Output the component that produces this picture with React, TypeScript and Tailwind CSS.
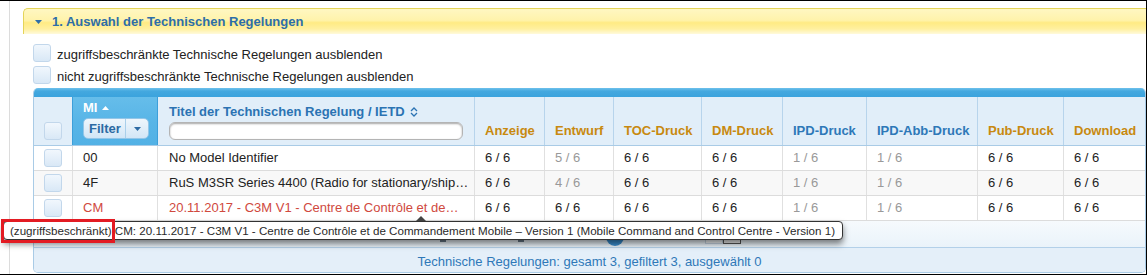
import React from "react";

const cols =
  "grid grid-cols-[39px_85px_317px_70px_69px_88px_81px_84px_111px_86px_81px]";

function Checkbox() {
  return (
    <div className="w-[18px] h-[18px] shrink-0 rounded-[3px] border border-[#c2d7eb] bg-[linear-gradient(#f1f7fd,#d9e8f6)]" />
  );
}

type Val = { t: string; g?: boolean };

const rows: { mi: string; title: string; red?: boolean; bg: string; vals: Val[] }[] = [
  {
    mi: "00",
    title: "No Model Identifier",
    bg: "bg-white",
    vals: [
      { t: "6 / 6" },
      { t: "5 / 6", g: true },
      { t: "6 / 6" },
      { t: "6 / 6" },
      { t: "1 / 6", g: true },
      { t: "1 / 6", g: true },
      { t: "6 / 6" },
      { t: "6 / 6" },
    ],
  },
  {
    mi: "4F",
    title: "RuS M3SR Series 4400 (Radio for stationary/ship…",
    bg: "bg-[#f8f8f8]",
    vals: [
      { t: "6 / 6" },
      { t: "4 / 6", g: true },
      { t: "6 / 6" },
      { t: "6 / 6" },
      { t: "1 / 6", g: true },
      { t: "1 / 6", g: true },
      { t: "6 / 6" },
      { t: "6 / 6" },
    ],
  },
  {
    mi: "CM",
    title: "20.11.2017 - C3M V1 - Centre de Contrôle et de…",
    red: true,
    bg: "bg-white",
    vals: [
      { t: "6 / 6" },
      { t: "6 / 6" },
      { t: "6 / 6" },
      { t: "6 / 6" },
      { t: "1 / 6", g: true },
      { t: "1 / 6", g: true },
      { t: "6 / 6" },
      { t: "6 / 6" },
    ],
  },
];

const heads: { t: string; blue?: boolean }[] = [
  { t: "Anzeige" },
  { t: "Entwurf" },
  { t: "TOC-Druck" },
  { t: "DM-Druck" },
  { t: "IPD-Druck", blue: true },
  { t: "IPD-Abb-Druck", blue: true },
  { t: "Pub-Druck" },
  { t: "Download" },
];

export default function App() {
  return (
    <div className="relative w-[1147px] h-[275px] overflow-hidden border-t border-r border-b border-black bg-white font-['Liberation_Sans',Arial,sans-serif] text-[13px] leading-[16px] text-[#222]">
      <div className="ml-[9px] h-full border-l border-[#dcdcdc] pl-[13px] pt-[7px] flex flex-col">
        {/* Accordion header */}
        <div className="flex h-[26px] items-center rounded-tl-[5px] border-t border-l border-[#e4d459] bg-[linear-gradient(#fff7c2_0%,#fff3ab_45%,#ffeb84_55%,#fff0a0_80%,#fffadc_100%)] pl-[11px]">
          <svg width="7" height="4" viewBox="0 0 7 4" className="mt-[1px]">
            <path d="M0 0H7L3.5 4Z" fill="#2f6fa8" />
          </svg>
          <span className="ml-[10px] text-[13px] font-bold text-[#2d6ea8]">
            1. Auswahl der Technischen Regelungen
          </span>
        </div>

        <div className="pl-[10px] flex flex-col flex-1">
          {/* Checkboxes */}
          <div className="mt-[10px] flex flex-col gap-[4px]">
            <div className="flex items-center gap-[6px] h-[18px]">
              <Checkbox />
              <span className="mt-[3px]">zugriffsbeschränkte Technische Regelungen ausblenden</span>
            </div>
            <div className="flex items-center gap-[6px] h-[18px]">
              <Checkbox />
              <span className="mt-[3px]">nicht zugriffsbeschränkte Technische Regelungen ausblenden</span>
            </div>
          </div>

          {/* Table */}
          <div className="mt-[4px] w-[1113px] rounded-t-[5px] rounded-b-[5px] border-l border-r border-b border-[#a9cbe6] overflow-hidden">
            <div className="h-[9px] bg-[linear-gradient(#6ec1ec,#44a8df_35%,#3ba3dd)]" />
            {/* Header row */}
            <div className={cols + " h-[49px] bg-[#e1eef9] border-b border-[#a9cbe6]"}>
              <div className="flex items-end justify-center pb-[5px] border-r border-[#3d9fda]">
                <Checkbox />
              </div>
              <div className="flex flex-col pl-[10px] pt-[3px] border-r border-[#3d9fda] bg-[linear-gradient(#66bdea,#58b5e7_50%,#52b1e5)]">
                <div className="flex items-center h-[16px] text-white font-bold">
                  <span>MI</span>
                  <svg width="7" height="4" viewBox="0 0 7 4" className="ml-[5px]">
                    <path d="M0 4H7L3.5 0Z" fill="#fff" />
                  </svg>
                </div>
                <div className="mt-[2px] flex h-[21px] w-[66px] rounded-[5px] border border-[#93c6e8] bg-[linear-gradient(#eef6fc,#d2e6f6)] overflow-hidden">
                  <div className="flex items-center w-[42px] pl-[5px] border-r border-[#a9cfea] font-bold text-[#2c6aa3]">
                    Filter
                  </div>
                  <div className="flex flex-1 items-center justify-center">
                    <svg width="7" height="4" viewBox="0 0 7 4">
                      <path d="M0 0H7L3.5 4Z" fill="#2c6aa3" />
                    </svg>
                  </div>
                </div>
              </div>
              <div className="flex flex-col pl-[11px] pr-[11px] pt-[7px] border-r border-[#b7d4ec]">
                <div className="flex items-center h-[16px] font-bold text-[#2b73b3]">
                  <span>Titel der Technischen Regelung / IETD</span>
                  <svg width="8" height="10" viewBox="0 0 8 10" className="ml-[5px]">
                    <path d="M1 4L4 1L7 4M1 6L4 9L7 6" fill="none" stroke="#2b73b3" strokeWidth="1.3" />
                  </svg>
                </div>
                <div className="mt-[2px] h-[18px] w-[294px] rounded-[6px] border border-[#b4b4b4] bg-white shadow-[inset_0_1px_2px_rgba(0,0,0,0.35)]" />
              </div>
              {heads.map((h, i) => (
                <div
                  key={h.t}
                  className={
                    "flex items-end pb-[6px] pl-[10px] font-bold whitespace-nowrap " +
                    (i < heads.length - 1 ? "border-r border-[#b7d4ec] " : "") +
                    (h.blue ? "text-[#2e78b8]" : "text-[#c8890f]")
                  }
                >
                  {h.t}
                </div>
              ))}
            </div>

            {/* Body rows */}
            {rows.map((r) => (
              <div key={r.mi} className={cols + " h-[25px] border-b border-[#dcdcdc] " + r.bg}>
                <div className="flex items-center justify-center border-r border-[#e0e0e0]">
                  <Checkbox />
                </div>
                <div className={"flex items-center pl-[10px] border-r border-[#e0e0e0] " + (r.red ? "text-[#d0493e]" : "")}>
                  {r.mi}
                </div>
                <div className={"flex items-center pl-[11px] border-r border-[#e0e0e0] whitespace-nowrap overflow-hidden " + (r.red ? "text-[#d0493e]" : "")}>
                  {r.title}
                </div>
                {r.vals.map((v, i) => (
                  <div
                    key={i}
                    className={
                      "flex items-center pl-[10px] whitespace-nowrap " +
                      (i < r.vals.length - 1 ? "border-r border-[#e0e0e0] " : "") +
                      (v.g ? "text-[#999]" : "text-[#222]")
                    }
                  >
                    {v.t}
                  </div>
                ))}
              </div>
            ))}

            {/* Pager */}
            <div className="flex h-[27px] items-end pb-[1px] pl-[406px] border-b border-[#b3d0e9] bg-[linear-gradient(#f6fafd,#eaf3fa)]">
              <div className="mb-[4px] h-[10px] w-[6px] bg-[#6b7c8c]" />
              <div className="ml-[72px] mb-[4px] h-[10px] w-[6px] bg-[#6b7c8c]" />
              <div className="ml-[82px] h-[18px] w-[18px] rounded-full bg-[#3a8fd0]" />
              <div className="ml-[81px] mb-[2px] h-[17px] w-[18px] border border-[#c7d6e3] bg-[#f4f8fb]" />
              <div className="mb-[2px] h-[17px] w-[18px] border border-[#555] bg-[#eee]" />
            </div>
            {/* Footer */}
            <div className="flex h-[24px] items-center justify-center bg-[#e4eff9] pt-[3px] text-[#2e78b8]">
              Technische Regelungen: gesamt 3, gefiltert 3, ausgewählt 0
            </div>
          </div>
        </div>
      </div>

      {/* Tooltip */}
      <div className="absolute left-[416px] top-[215px] h-0 w-0 border-l-[5px] border-r-[5px] border-b-[5px] border-l-transparent border-r-transparent border-b-[#444]" />
      <div className="absolute left-[3px] top-[220px] flex h-[19px] w-[840px] items-center rounded-[4px] border border-[#333] bg-white pl-[6px] text-[11.6px] leading-[14px] text-[#2a2a2a] whitespace-nowrap shadow-[0_4px_6px_rgba(0,0,0,0.5)]">
        (zugriffsbeschränkt) CM: 20.11.2017 - C3M V1 - Centre de Contrôle et de Commandement Mobile – Version 1 (Mobile Command and Control Centre - Version 1)
      </div>
      {/* Red annotation box */}
      <div className="absolute left-[1px] top-[218px] h-[24px] w-[114px] border-[3px] border-[#e31b23]" />
    </div>
  );
}
